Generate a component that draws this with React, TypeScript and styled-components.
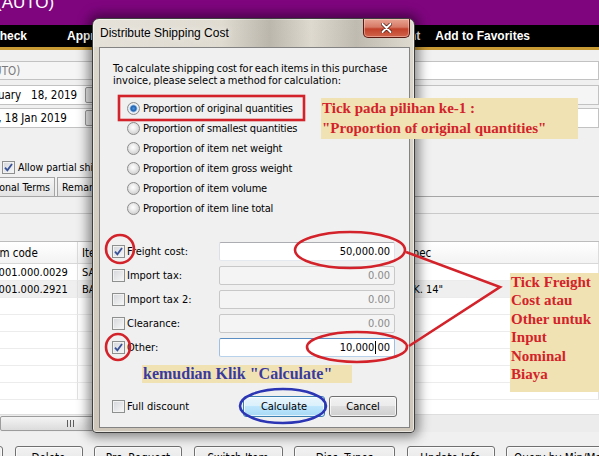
import React from "react";
import styled, { createGlobalStyle } from "styled-components";

const UI_FONT = `"DejaVu Sans Condensed", "DejaVu Sans", sans-serif`;
const NOTE_FONT = `"Liberation Serif", "Times New Roman", serif`;
const RED = "#d3222a";

const GlobalStyle = createGlobalStyle`
  html, body { margin: 0; padding: 0; background: #f0f0f0; }
  body { font-family: ${UI_FONT}; }
`;

const Screen = styled.div`
  position: relative;
  width: 599px;
  height: 456px;
  overflow: hidden;
  background: #f0f0f0;
  display: flex;
  flex-direction: column;
  font-family: ${UI_FONT};
  font-size: 11px;
  color: #000;
`;

const AppHeader = styled.header`
  flex: none;
  height: 25px;
  background: #7f057f;
  overflow: hidden;
`;

const HeaderTitle = styled.div`
  margin: -6px 0 0 -4px;
  color: #fff;
  font: 17px/17px "Liberation Sans", Arial, sans-serif;
`;

const MenuBar = styled.nav`
  flex: none;
  height: 22px;
  background: #000;
  border-bottom: 3px solid #c99b35;
  display: flex;
  align-items: center;
  justify-content: space-between;
  padding-right: 69px;
  color: #fff;
  font: bold 12px "Liberation Sans", Arial, sans-serif;
`;

const MenuGroup = styled.div<{ $shift?: number; $gap: number }>`
  display: flex;
  gap: ${(p) => p.$gap}px;
  margin-left: ${(p) => p.$shift ?? 0}px;
  white-space: nowrap;
`;

const FormRow = styled.div<{ $top: number; $h: number }>`
  flex: none;
  display: flex;
  justify-content: space-between;
  margin-top: ${(p) => p.$top}px;
  height: ${(p) => p.$h}px;
`;

const InputBox = styled.div<{ $w: number; $shift?: number; $tone?: "white" | "soft" }>`
  box-sizing: border-box;
  width: ${(p) => p.$w}px;
  margin-left: ${(p) => p.$shift ?? 0}px;
  height: 100%;
  display: flex;
  align-items: center;
  padding-left: 3px;
  white-space: pre;
  overflow: hidden;
  border: 1px solid #c2c2c2;
  background: ${(p) => (p.$tone === "soft" ? "#f5f5f5" : "#fff")};
  color: ${(p) => (p.$tone === "soft" ? "#7a7a7a" : "#000")};
  font-size: 11.5px;
`;

const DateButton = styled.span`
  margin-left: auto;
  margin-right: 4px;
  width: 8px;
  height: 14px;
  border: 1px solid #9a9a9a;
  border-radius: 2px;
  background: #ececec;
`;

const CheckLine = styled.label`
  flex: none;
  margin-top: 32px;
  height: 14px;
  padding-left: 2px;
  display: flex;
  align-items: center;
  gap: 3px;
  font-size: 10.5px;
`;

const TabsRow = styled.div`
  flex: none;
  margin-top: 3px;
  height: 19px;
  display: flex;
  gap: 2px;
  border-bottom: 1px solid #a5a5a5;
`;

const Tab = styled.div<{ $shift?: number }>`
  margin-left: ${(p) => p.$shift ?? 0}px;
  padding: 0 4px;
  display: flex;
  align-items: center;
  border: 1px solid #a5a5a5;
  border-bottom: none;
  background: linear-gradient(#f6f6f6, #e3e3e3);
  font-size: 10.5px;
  white-space: nowrap;
`;

const TabPanel = styled.div`
  flex: none;
  height: 44px;
  display: flex;
  align-items: flex-end;
`;

const PanelLine = styled.div`
  width: 100%;
  height: 27px;
  border-top: 1px solid #c9c9c9;
`;

const Grid = styled.div`
  flex: none;
  margin-left: -18px;
  height: 172px;
  background: #fff;
  display: grid;
  grid-template-columns: 96px 324px 1fr;
  grid-auto-rows: 17px;
  grid-template-rows: 22px;
  border-top: 1px solid #bcbcbc;
`;

const HeadCell = styled.div`
  display: flex;
  align-items: center;
  padding-left: 4px;
  background: linear-gradient(#ffffff, #f3f3f3);
  border-right: 1px solid #dcdcdc;
  border-bottom: 1px solid #d8d8d8;
  font-size: 11.5px;
  white-space: nowrap;
  overflow: hidden;
`;

const Cell = styled.div<{ $shade?: boolean }>`
  display: flex;
  align-items: center;
  padding-left: 4px;
  border-right: 1px solid #e2e2e2;
  border-bottom: 1px solid #ececec;
  background: ${(p) => (p.$shade ? "#efefef" : "#fff")};
  font-size: 11px;
  white-space: nowrap;
  overflow: hidden;
`;

const ScrollBar = styled.div`
  flex: none;
  height: 17px;
  background: #ececec;
  border-top: 1px solid #dedede;
  display: flex;
  align-items: center;
`;

const ScrollThumb = styled.div`
  width: 138px;
  height: 13px;
  border: 1px solid #9c9c9c;
  border-radius: 2px;
  background: linear-gradient(#f4f4f4, #dcdcdc);
  display: flex;
  align-items: center;
  justify-content: center;
`;

const Grip = styled.span`
  width: 7px;
  height: 7px;
  background: repeating-linear-gradient(to right, #5c5c5c 0 1px, transparent 1px 3px);
`;

const ButtonBar = styled.div`
  flex: none;
  margin-top: 14px;
  margin-left: -58px;
  display: flex;
  gap: 11.5px;
`;

const WinButton = styled.button<{ $w: number; $hot?: boolean; $h?: number }>`
  flex: none;
  width: ${(p) => p.$w}px;
  height: ${(p) => p.$h ?? 23}px;
  box-sizing: border-box;
  padding: 0;
  border: 1px solid ${(p) => (p.$hot ? "#3c7fb1" : "#707070")};
  border-radius: 3px;
  background: ${(p) =>
    p.$hot
      ? "linear-gradient(#eaf6fd 0%, #d9f0fc 49%, #bee6fd 50%, #a7d9f5 100%)"
      : "linear-gradient(#f2f2f2 0%, #ebebeb 49%, #dddddd 50%, #cfcfcf 100%)"};
  box-shadow: inset 0 0 0 1px rgba(255, 255, 255, 0.7);
  font-family: ${UI_FONT};
  font-size: 11px;
  color: #000;
  white-space: nowrap;
`;

const AppButton = styled(WinButton)`
  font-size: 11.5px;
  align-self: flex-start;
`;

/* ---------- dialog ---------- */

const Dialog = styled.section`
  position: absolute;
  left: 92px;
  top: 18px;
  width: 323px;
  height: 415px;
  box-sizing: border-box;
  border: 1px solid #3f3f3f;
  border-radius: 7px 7px 4px 4px;
  background: linear-gradient(to bottom, #ddd8cd, #d3cdc0 60%, #cec7b9);
  box-shadow: 0 0 12px 4px rgba(0, 0, 0, 0.45), inset 0 0 0 1px rgba(255, 255, 255, 0.55);
  display: flex;
  flex-direction: column;
`;

const TitleBar = styled.div`
  height: 28px;
  flex: none;
  display: flex;
  align-items: flex-start;
  padding: 0 4px 0 7px;
  border-radius: 6px 6px 0 0;
  background: linear-gradient(
    to right,
    rgba(255, 255, 255, 0.25) 0%,
    rgba(255, 255, 255, 0.1) 40%,
    rgba(90, 85, 78, 0.25) 55%,
    rgba(255, 255, 255, 0.05) 68%,
    rgba(90, 85, 78, 0.22) 82%,
    rgba(255, 255, 255, 0.1) 100%
  );
`;

const Title = styled.span`
  margin-top: 7px;
  font: 12px "Liberation Sans", Arial, sans-serif;
  color: #000;
  text-shadow: 0 0 6px rgba(255, 255, 255, 0.9);
`;

const CloseButton = styled.span`
  margin-left: auto;
  width: 47px;
  height: 19px;
  box-sizing: border-box;
  border: 1px solid #5a1a12;
  border-top: none;
  border-radius: 0 0 5px 5px;
  background: linear-gradient(#e8a493 0%, #d67a66 45%, #c2412a 55%, #d0654c 100%);
  box-shadow: inset 0 0 0 1px rgba(255, 220, 210, 0.45);
  display: flex;
  align-items: center;
  justify-content: center;
`;

const Client = styled.div`
  flex: 1;
  margin: 0 4px 4px 6px;
  border: 1px solid #838383;
  background: #f0f0f0;
  display: flex;
  flex-direction: column;
  padding: 15px 12px 10px 12px;
`;

const Intro = styled.p`
  margin: 0 0 0 1px;
  line-height: 12px;
  font-size: 11px;
  word-spacing: -1px;
`;

const RadioList = styled.div`
  margin-top: 11px;
  padding-left: 15px;
  display: flex;
  flex-direction: column;
`;

const RadioRow = styled.label`
  height: 20px;
  display: flex;
  align-items: center;
  gap: 3px;
  letter-spacing: -0.2px;
`;

const RadioDot = styled.span<{ $on?: boolean }>`
  flex: none;
  width: 13px;
  height: 13px;
  box-sizing: border-box;
  border-radius: 50%;
  border: 1px solid #8c8c8c;
  background: ${(p) =>
    p.$on
      ? "radial-gradient(circle, #4c97dd 0, #1f5fae 2.6px, #a7c9ea 3.6px, #f3f6fa 4.4px, #dadada 6px)"
      : "radial-gradient(circle at 45% 40%, #ffffff 0, #ededed 3px, #d6d6d6 6px)"};
`;

const CostList = styled.div`
  margin-top: 21px;
  display: flex;
  flex-direction: column;
`;

const CostRow = styled.div`
  height: 24px;
  display: grid;
  grid-template-columns: 13px 90px 176px;
  column-gap: 2px;
  align-items: center;
`;

const Box = styled.span`
  width: 13px;
  height: 13px;
  box-sizing: border-box;
  border: 1px solid #8e8f8f;
  background: linear-gradient(135deg, #d4d6da, #f7f7f7);
  box-shadow: inset 0 0 0 1px #f2f2f2;
  display: flex;
  align-items: center;
  justify-content: center;
`;

const CostLabel = styled.span`
  white-space: nowrap;
`;

const Amount = styled.span<{ $state: "on" | "off" | "focus" }>`
  box-sizing: border-box;
  height: 19px;
  padding-right: 4px;
  display: flex;
  align-items: center;
  justify-content: flex-end;
  border: 1px solid;
  border-radius: 2px;
  border-color: ${(p) =>
    p.$state === "focus"
      ? "#5b8fc4 #9ec0e3 #b8d2ec #9ec0e3"
      : p.$state === "on"
      ? "#abadb3 #e2e3ea #e3e9ef #dbdfe6"
      : "#c8c8c8"};
  background: ${(p) => (p.$state === "off" ? "#f4f4f4" : "#fff")};
  color: ${(p) => (p.$state === "off" ? "#8a8a8a" : "#000")};
  font-size: 11px;
`;

const Caret = styled.span`
  display: inline-block;
  width: 1px;
  height: 13px;
  margin: 0 1px;
  background: #000;
`;

const FooterRow = styled.div`
  margin-top: auto;
  height: 21px;
  display: flex;
  align-items: center;
  gap: 2px;
`;

const FooterButtons = styled.div`
  margin-left: auto;
  display: flex;
  gap: 4px;
`;

/* ---------- annotations ---------- */

const Marks = styled.svg`
  position: absolute;
  left: 0;
  top: 0;
  pointer-events: none;
`;

const Note = styled.div<{ $x: number; $y: number; $w: number; $h: number; $color: string; $size: number; $lh: number }>`
  position: absolute;
  left: ${(p) => p.$x}px;
  top: ${(p) => p.$y}px;
  width: ${(p) => p.$w}px;
  height: ${(p) => p.$h}px;
  box-sizing: border-box;
  padding-left: 1px;
  background: #f0e2b3;
  color: ${(p) => p.$color};
  font: bold ${(p) => p.$size}px/${(p) => p.$lh}px ${NOTE_FONT};
  white-space: pre;
`;

const Tick = () => (
  <svg width="9" height="9" viewBox="0 0 9 9">
    <path d="M1 4.6 L3.4 7.4 L8 1" fill="none" stroke="#38529a" strokeWidth="1.8" />
  </svg>
);

const Check = ({ on }: { on?: boolean }) => <Box>{on && <Tick />}</Box>;

const methods = [
  "Proportion of original quantities",
  "Proportion of smallest quantities",
  "Proportion of item net weight",
  "Proportion of item gross weight",
  "Proportion of item volume",
  "Proportion of item line total",
];

const costs: { label: string; on: boolean; state: "on" | "off" | "focus"; value: React.ReactNode }[] = [
  { label: "Freight cost:", on: true, state: "on", value: "50,000.00" },
  { label: "Import tax:", on: false, state: "off", value: "0.00" },
  { label: "Import tax 2:", on: false, state: "off", value: "0.00" },
  { label: "Clearance:", on: false, state: "off", value: "0.00" },
  {
    label: "Other:",
    on: true,
    state: "focus",
    value: (
      <>
        10,000<Caret />00
      </>
    ),
  },
];

const rows = [
  ["10001.000.0029", "SAMPLE ITEM", ""],
  ["10001.000.2921", "BAUT", "UK. 14\""],
  ["", "", ""],
  ["", "", ""],
  ["", "", ""],
  ["", "", ""],
  ["", "", ""],
  ["", "", ""],
];

export default function App() {
  return (
    <Screen>
      <GlobalStyle />
      <AppHeader>
        <HeaderTitle>(AUTO)</HeaderTitle>
      </AppHeader>
      <MenuBar>
        <MenuGroup $shift={-9} $gap={40}>
          <span>Check</span>
          <span>Approve</span>
        </MenuGroup>
        <MenuGroup $gap={15}>
          <span>Print</span>
          <span>Add to Favorites</span>
        </MenuGroup>
      </MenuBar>

      <FormRow $top={11} $h={19}>
        <InputBox $w={121} $shift={-21} $tone="soft">(AUTO)</InputBox>
        <InputBox $w={249} />
      </FormRow>
      <FormRow $top={5} $h={20}>
        <InputBox $w={122} $shift={-22}>
          {"January   18, 2019"}
          <DateButton />
        </InputBox>
        <InputBox $w={249} $tone="soft" />
      </FormRow>
      <FormRow $top={3} $h={20}>
        <InputBox $w={137} $shift={-37}>
          Friday, 18 Jan 2019
          <DateButton />
        </InputBox>
        <InputBox $w={249} />
      </FormRow>

      <CheckLine>
        <Check on />
        Allow partial shipment
      </CheckLine>
      <TabsRow>
        <Tab $shift={-33}>Additional Terms</Tab>
        <Tab>Remarks</Tab>
      </TabsRow>
      <TabPanel>
        <PanelLine />
      </TabPanel>

      <Grid>
        <HeadCell>Item code</HeadCell>
        <HeadCell>Item name</HeadCell>
        <HeadCell>Spec</HeadCell>
        {rows.map((r, i) =>
          r.map((c, j) => (
            <Cell key={`${i}-${j}`} $shade={i === 1}>
              {c}
            </Cell>
          ))
        )}
      </Grid>
      <ScrollBar>
        <ScrollThumb>
          <Grip />
        </ScrollThumb>
      </ScrollBar>
      <ButtonBar>
        <AppButton $w={61}>Add</AppButton>
        <AppButton $w={68}>Delete</AppButton>
        <AppButton $w={88}>Prc. Request</AppButton>
        <AppButton $w={89}>Switch Item</AppButton>
        <AppButton $w={101}>Disc. Types</AppButton>
        <AppButton $w={88}>Update Info</AppButton>
        <AppButton $w={110}>Query by Min/Max</AppButton>
      </ButtonBar>

      <Dialog>
        <TitleBar>
          <Title>Distribute Shipping Cost</Title>
          <CloseButton>
            <svg width="11" height="10" viewBox="0 0 11 10">
              <path d="M1.5 1 L9.5 9 M9.5 1 L1.5 9" stroke="#4a1208" strokeWidth="3.4" strokeLinecap="round" />
              <path d="M1.5 1 L9.5 9 M9.5 1 L1.5 9" stroke="#fff" strokeWidth="2" strokeLinecap="round" />
            </svg>
          </CloseButton>
        </TitleBar>
        <Client>
          <Intro>
            To calculate shipping cost for each items in this purchase
            <br />
            invoice, please select a method for calculation:
          </Intro>
          <RadioList>
            {methods.map((m, i) => (
              <RadioRow key={m}>
                <RadioDot $on={i === 0} />
                {m}
              </RadioRow>
            ))}
          </RadioList>
          <CostList>
            {costs.map((c) => (
              <CostRow key={c.label}>
                <Check on={c.on} />
                <CostLabel>{c.label}</CostLabel>
                <Amount $state={c.state}>{c.value}</Amount>
              </CostRow>
            ))}
          </CostList>
          <FooterRow>
            <Check />
            Full discount
            <FooterButtons>
              <WinButton $w={82} $h={21} $hot>
                Calculate
              </WinButton>
              <WinButton $w={68} $h={21}>
                Cancel
              </WinButton>
            </FooterButtons>
          </FooterRow>
        </Client>
      </Dialog>

      <Marks width="599" height="456" viewBox="0 0 599 456">
        <g fill="none" stroke={RED} strokeWidth="2.6">
          <rect x="119" y="96" width="185" height="24" />
          <ellipse cx="120" cy="249" rx="14" ry="14" />
          <ellipse cx="118" cy="347" rx="12" ry="13" />
          <ellipse cx="350" cy="250" rx="55" ry="18" />
          <ellipse cx="357" cy="347" rx="50" ry="15" />
          <path d="M406 252 L500 287 L409 346" />
        </g>
        <ellipse cx="283" cy="406" rx="43" ry="17" fill="none" stroke="#2c35b4" strokeWidth="2.6" />
      </Marks>

      <Note $x={321} $y={98} $w={257} $h={41} $color={RED} $size={15} $lh={20}>
        {"Tick pada pilihan ke-1 :\n\"Proportion of original quantities\""}
      </Note>
      <Note $x={510} $y={273} $w={95} $h={119} $color={RED} $size={15} $lh={18.4}>
        {"Tick Freight\nCost atau\nOther untuk\nInput\nNominal\nBiaya"}
      </Note>
      <Note $x={142} $y={365} $w={210} $h={18} $color="#3a3a9e" $size={16} $lh={18}>
        {"kemudian Klik \"Calculate\""}
      </Note>
    </Screen>
  );
}
